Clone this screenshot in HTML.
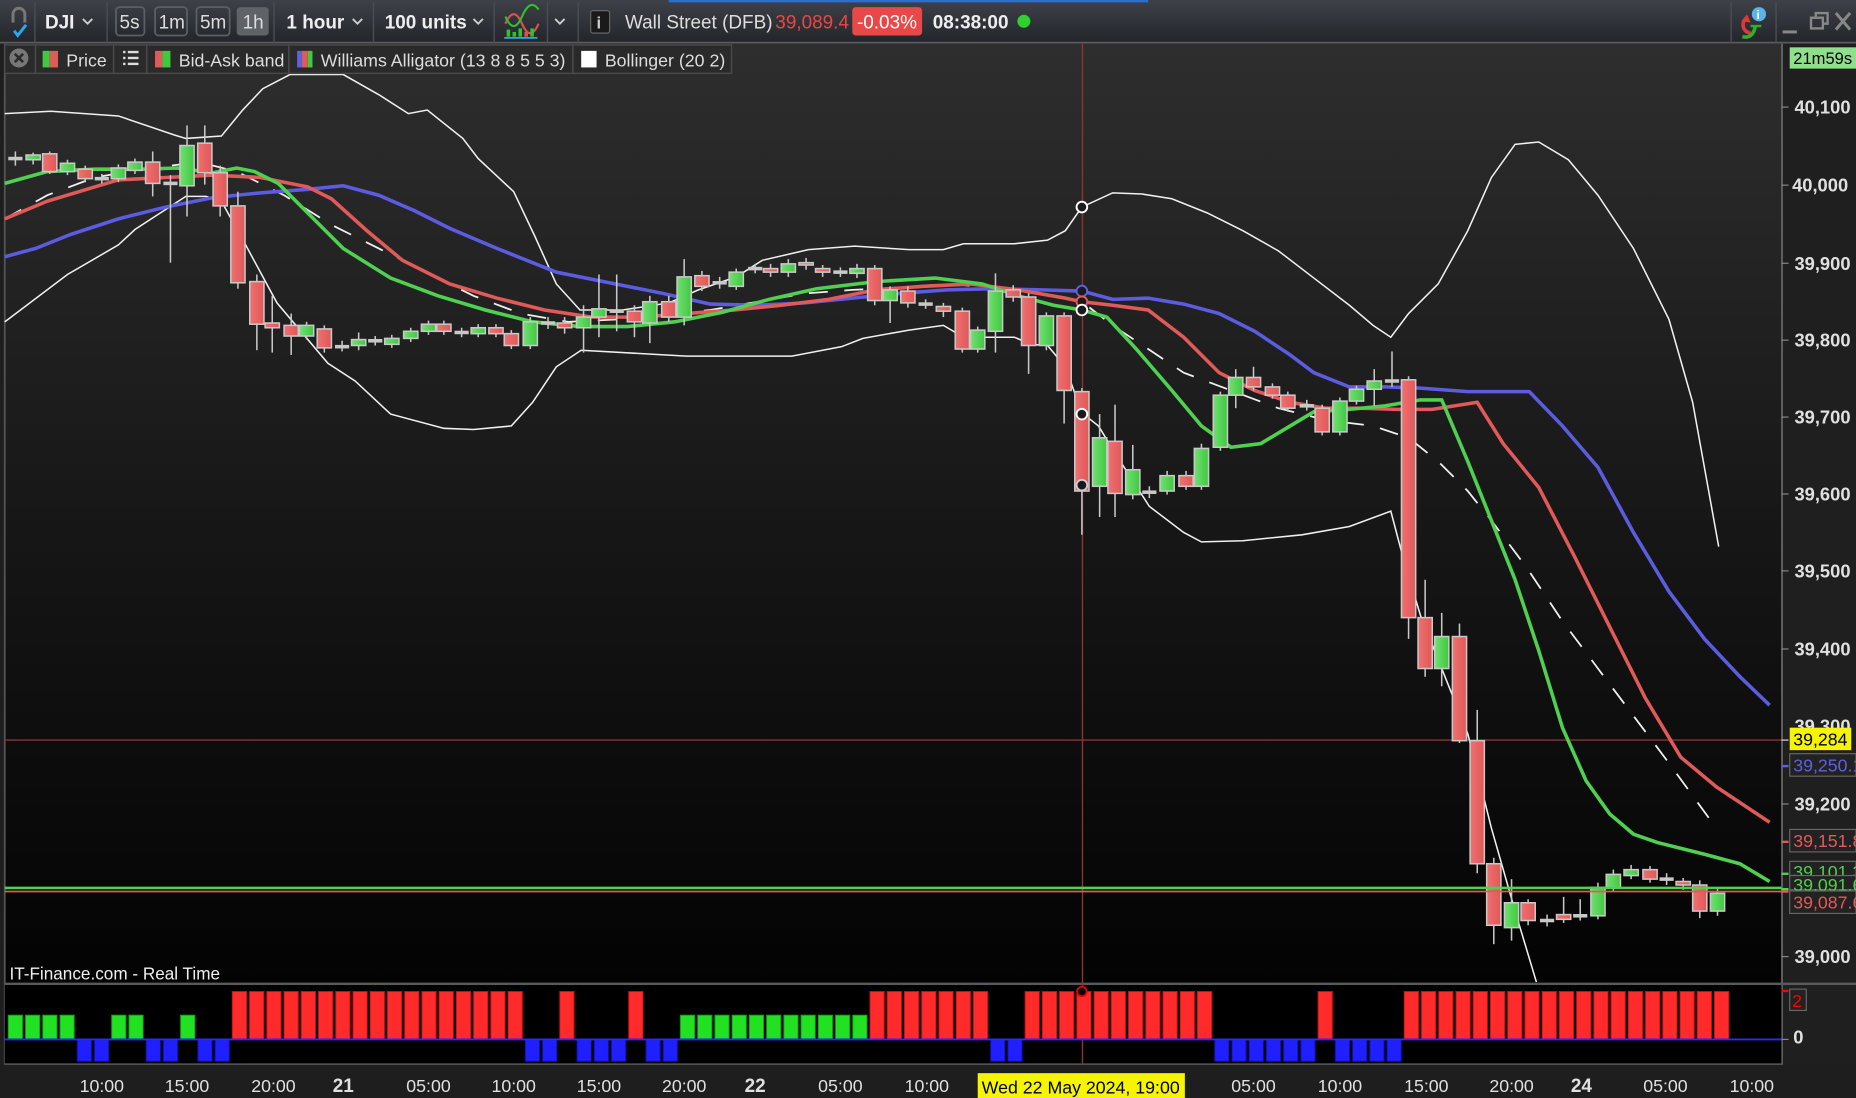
<!DOCTYPE html>
<html><head><meta charset="utf-8"><style>
html,body{margin:0;padding:0;background:#000;overflow:hidden}
svg{display:block}
text{font-family:"Liberation Sans",sans-serif}
</style></head><body>
<svg id="s" width="1856" height="1098" viewBox="0 0 1568 928" preserveAspectRatio="none" xmlns="http://www.w3.org/2000/svg">
<defs>
<linearGradient id="bg" x1="0" y1="0" x2="0" y2="1"><stop offset="0" stop-color="#2e2e2e"/><stop offset="0.5" stop-color="#171717"/><stop offset="1" stop-color="#030303"/></linearGradient>
<linearGradient id="tb" x1="0" y1="0" x2="0" y2="1"><stop offset="0" stop-color="#3e4248"/><stop offset="1" stop-color="#22252a"/></linearGradient>
<linearGradient id="rc" x1="0" y1="0" x2="1" y2="0"><stop offset="0" stop-color="#f07070"/><stop offset="1" stop-color="#e05858"/></linearGradient>
<linearGradient id="gc" x1="0" y1="0" x2="1" y2="0"><stop offset="0" stop-color="#70e070"/><stop offset="1" stop-color="#40c840"/></linearGradient>
</defs>
<rect width="1568" height="928" fill="#1e1e1e"/>
<!-- chart bg -->
<rect x="4" y="37" width="1501" height="794" fill="url(#bg)"/>
<rect x="1505" y="37" width="63" height="863" fill="#1f1f1f"/>
<line x1="1505.5" y1="37" x2="1505.5" y2="900" stroke="#666" stroke-width="1.5"/>
<line x1="4" y1="37" x2="4" y2="900" stroke="#555" stroke-width="1.5"/>
<!-- indicator panel -->
<rect x="4" y="832" width="1501" height="67" fill="#000"/>
<line x1="4" y1="831.5" x2="1568" y2="831.5" stroke="#5a5a5a" stroke-width="2"/>
<line x1="4" y1="899.5" x2="1505" y2="899.5" stroke="#5a5a5a" stroke-width="1.5"/>
<rect x="0" y="900" width="1568" height="28" fill="#1e1e1e"/>
<g id="grid"></g>
<!-- horizontal lines -->
<line x1="4" y1="625.5" x2="1505" y2="625.5" stroke="#8a3434" stroke-width="1.2"/>
<line x1="914.5" y1="37" x2="914.5" y2="900" stroke="#8a3434" stroke-width="1.2"/>
<g id="lines"></g>
<g id="candles"></g>
<line x1="4" y1="750.5" x2="1505" y2="750.5" stroke="#4fd04f" stroke-width="2.2"/>
<line x1="4" y1="753.5" x2="1505" y2="753.5" stroke="#e05a5a" stroke-width="1.5"/>
<g id="circles" fill="#1a1a1a" stroke-width="1.6">
<circle cx="914" cy="175" r="4.5" stroke="#fff"/>
<circle cx="914" cy="246" r="4.5" stroke="#6060e0"/>
<circle cx="914" cy="255" r="4.5" stroke="#e05a5a"/>
<circle cx="914" cy="262" r="4.5" stroke="#fff"/>
<circle cx="914" cy="350" r="4.5" stroke="#fff"/>
<circle cx="914" cy="410" r="4.5" stroke="#ccc"/>
</g>
<g id="bars"></g>
<line x1="4" y1="878.5" x2="1505" y2="878.5" stroke="#2a2aff" stroke-width="1.5"/>
<circle cx="914" cy="838" r="4" fill="#000" stroke="#e00" stroke-width="1.5"/>
<text x="8" y="828" font-size="14.5" fill="#eee">IT-Finance.com - Real Time</text>

<!-- price axis -->
<g font-size="15.5" fill="#e0e0e0" font-weight="bold">
<text x="1516" y="96">40,100</text>
<text x="1514" y="162">40,000</text>
<text x="1516" y="228">39,900</text>
<text x="1516" y="293">39,800</text>
<text x="1516" y="358">39,700</text>
<text x="1516" y="423">39,600</text>
<text x="1516" y="488">39,500</text>
<text x="1516" y="554">39,400</text>
<text x="1516" y="619">39,300</text>
<text x="1516" y="685">39,200</text>
<text x="1516" y="814">39,000</text>
</g>
<g stroke="#888" stroke-width="1">
<line x1="1505" y1="90.5" x2="1511" y2="90.5"/><line x1="1505" y1="156.5" x2="1511" y2="156.5"/><line x1="1505" y1="222.5" x2="1511" y2="222.5"/><line x1="1505" y1="287.5" x2="1511" y2="287.5"/><line x1="1505" y1="352.5" x2="1511" y2="352.5"/><line x1="1505" y1="417.5" x2="1511" y2="417.5"/><line x1="1505" y1="482.5" x2="1511" y2="482.5"/><line x1="1505" y1="548.5" x2="1511" y2="548.5"/><line x1="1505" y1="679.5" x2="1511" y2="679.5"/><line x1="1505" y1="808.5" x2="1511" y2="808.5"/>
</g>
<rect x="1512" y="40" width="56" height="18" fill="#8ee08a"/>
<text x="1515" y="54" font-size="14" fill="#000">21m59s</text>
<rect x="1512" y="728" width="56" height="14" fill="#222" stroke="#666"/>
<text x="1515" y="742" font-size="15" fill="#4fd04f">39,101.3</text>
<rect x="1512" y="740" width="56" height="12" fill="#222" stroke="#666"/>
<text x="1515" y="753" font-size="15" fill="#4fd04f">39,091.6</text>
<rect x="1512" y="615" width="52" height="19" fill="#f5f500"/>
<text x="1515" y="630" font-size="15" fill="#000">39,284</text>
<rect x="1512" y="637" width="56" height="19" fill="#222" stroke="#666"/>
<text x="1515" y="652" font-size="15" fill="#6060e0">39,250.1</text>
<rect x="1512" y="701" width="56" height="19" fill="#222" stroke="#666"/>
<text x="1515" y="716" font-size="15" fill="#e05a5a">39,151.8</text>
<rect x="1512" y="753" width="56" height="19" fill="#222" stroke="#666"/>
<text x="1515" y="768" font-size="15" fill="#e05a5a">39,087.6</text>
<line x1="1505" y1="625.5" x2="1511" y2="625.5" stroke="#ddd"/>
<line x1="1505" y1="647.5" x2="1511" y2="647.5" stroke="#6060e0" stroke-width="2"/>
<line x1="1505" y1="711.5" x2="1511" y2="711.5" stroke="#e05a5a" stroke-width="2"/>
<line x1="1505" y1="738.5" x2="1511" y2="738.5" stroke="#4fd04f" stroke-width="2"/>
<line x1="1505" y1="751.5" x2="1511" y2="751.5" stroke="#4fd04f" stroke-width="2"/>
<line x1="1505" y1="753.5" x2="1511" y2="753.5" stroke="#e05a5a" stroke-width="2"/>
<rect x="1512" y="836" width="14" height="18" fill="#222" stroke="#666"/>
<text x="1514" y="851" font-size="15" fill="#f00">2</text>
<line x1="1505" y1="837.5" x2="1511" y2="837.5" stroke="#f00" stroke-width="2"/>
<text x="1515" y="882" font-size="15.5" fill="#e0e0e0" font-weight="bold">0</text>
<line x1="1505" y1="878.5" x2="1511" y2="878.5" stroke="#888"/>

<!-- time axis -->
<g font-size="15" fill="#e0e0e0" text-anchor="middle">
<text x="86" y="923">10:00</text><text x="158" y="923">15:00</text><text x="231" y="923">20:00</text>
<text x="290" y="923" font-weight="bold" font-size="16">21</text>
<text x="362" y="923">05:00</text><text x="434" y="923">10:00</text><text x="506" y="923">15:00</text><text x="578" y="923">20:00</text>
<text x="638" y="923" font-weight="bold" font-size="16">22</text>
<text x="710" y="923">05:00</text><text x="783" y="923">10:00</text>
<text x="1059" y="923">05:00</text><text x="1132" y="923">10:00</text><text x="1205" y="923">15:00</text><text x="1277" y="923">20:00</text>
<text x="1336" y="923" font-weight="bold" font-size="16">24</text>
<text x="1407" y="923">05:00</text><text x="1480" y="923">10:00</text>
</g>
<rect x="826" y="907" width="175" height="21" fill="#f5f500"/>
<text x="913" y="924" font-size="15" fill="#000" text-anchor="middle">Wed 22 May 2024, 19:00</text>

<!-- toolbar -->
<rect x="0" y="0" width="1568" height="36" fill="url(#tb)"/>
<rect x="565" y="0" width="405" height="2" fill="#2a6fd4"/>
<line x1="0" y1="36" x2="1568" y2="36" stroke="#595d62" stroke-width="1.5"/>
<g stroke="#4a4e54" stroke-width="1.2">
<line x1="29.5" y1="2" x2="29.5" y2="36"/><line x1="90.5" y1="2" x2="90.5" y2="36"/><line x1="231.5" y1="2" x2="231.5" y2="36"/><line x1="315.5" y1="2" x2="315.5" y2="36"/><line x1="417.5" y1="2" x2="417.5" y2="36"/><line x1="462.5" y1="2" x2="462.5" y2="36"/><line x1="488.5" y1="2" x2="488.5" y2="36"/><line x1="1462.5" y1="2" x2="1462.5" y2="36"/><line x1="1500.5" y1="2" x2="1500.5" y2="36"/>
</g>
<!-- left logo -->
<path d="M11 19 V12 a5 5 0 0 1 10 0 V19" fill="none" stroke="#777" stroke-width="2.5"/>
<path d="M12 26 l3 4 l7 -9" fill="none" stroke="#2aa9f0" stroke-width="2.5"/>
<text x="38" y="24" font-size="16" fill="#eee" font-weight="bold">DJI</text>
<path d="M70 16 l4 4 l4 -4" fill="none" stroke="#ccc" stroke-width="1.6"/>
<g fill="none" stroke="#5a5f66" stroke-width="1.5">
<rect x="98" y="6" width="24" height="24" rx="3"/><rect x="131" y="6" width="27" height="24" rx="3"/><rect x="166" y="6" width="28" height="24" rx="3"/>
</g>
<rect x="200" y="6" width="27" height="24" rx="3" fill="#5f6368"/>
<g font-size="16" fill="#ddd">
<text x="101" y="24">5s</text><text x="134" y="24">1m</text><text x="169" y="24">5m</text><text x="205" y="24">1h</text>
</g>
<text x="242" y="24" font-size="16" fill="#eee" font-weight="bold">1 hour</text>
<path d="M298 16 l4 4 l4 -4" fill="none" stroke="#ccc" stroke-width="1.6"/>
<text x="325" y="24" font-size="16" fill="#eee" font-weight="bold">100 units</text>
<path d="M400 16 l4 4 l4 -4" fill="none" stroke="#ccc" stroke-width="1.6"/>
<path d="M427 20 q7 -16 14 0 t14 0" fill="none" stroke="#e05050" stroke-width="1.8"/>
<path d="M427 14 q7 16 14 0 t14 -6" fill="none" stroke="#30c030" stroke-width="1.8"/>
<g fill="#30c030"><rect x="428" y="25" width="3" height="6"/><rect x="433" y="27" width="3" height="4"/><rect x="438" y="24" width="3" height="7"/><rect x="443" y="27" width="3" height="4" fill="#e05050"/><rect x="448" y="24" width="3" height="7"/></g>
<line x1="426" y1="32" x2="454" y2="32" stroke="#2aa9f0" stroke-width="1.5"/>
<path d="M469 16 l4 4 l4 -4" fill="none" stroke="#ccc" stroke-width="1.6"/>
<rect x="499" y="9" width="16" height="19" rx="2" fill="#1a1a1a" stroke="#666"/>
<text x="504" y="24" font-size="14" fill="#ccc" font-weight="bold">i</text>
<text x="528" y="24" font-size="16" fill="#ddd">Wall Street (DFB)</text>
<text x="655" y="24" font-size="16" fill="#ee4444">39,089.4</text>
<rect x="720" y="6" width="59" height="24" rx="3" fill="#e84848"/>
<text x="724" y="24" font-size="16" fill="#fff">-0.03%</text>
<text x="788" y="24" font-size="16" fill="#eee" font-weight="bold">08:38:00</text>
<circle cx="865" cy="18" r="5.5" fill="#2fd02f"/>
<!-- right icons -->
<path d="M1479 28 a7 7 0 0 1 -3 -13" fill="none" stroke="#e03838" stroke-width="3"/>
<path d="M1471 18 l5 -6 l3 7z" fill="#e03838"/>
<path d="M1472 31 q9 2 11 -9" fill="none" stroke="#2fb02f" stroke-width="3"/>
<line x1="1479" y1="22" x2="1488" y2="22" stroke="#2fb02f" stroke-width="2"/>
<circle cx="1486" cy="12" r="6" fill="#5ab4ea"/>
<text x="1484" y="16" font-size="10" fill="#fff" font-weight="bold">i</text>
<line x1="1506" y1="27" x2="1518" y2="27" stroke="#888" stroke-width="2.5"/>
<rect x="1530" y="15" width="10" height="9" fill="none" stroke="#888" stroke-width="2"/>
<path d="M1534 14 v-3 h10 v9 h-3" fill="none" stroke="#888" stroke-width="2"/>
<path d="M1551 11 l12 14 M1563 11 l-12 14" stroke="#888" stroke-width="2.5"/>

<!-- legend row -->
<g fill="#2a2a2a" stroke="#4a4a4a" stroke-width="1.2">
<rect x="4" y="38" width="26" height="24"/><rect x="30" y="38" width="66" height="24"/><rect x="96" y="38" width="28" height="24"/><rect x="124" y="38" width="120" height="24"/><rect x="244" y="38" width="240" height="24"/><rect x="484" y="38" width="134" height="24"/>
</g>
<circle cx="16" cy="49" r="8" fill="#777"/>
<path d="M12.5 45.5 l7 7 M19.5 45.5 l-7 7" stroke="#2a2a2a" stroke-width="2.2"/>
<rect x="36" y="43" width="6" height="14" fill="#40c840"/><rect x="42" y="43" width="7" height="14" fill="#e05a5a"/>
<text x="56" y="56" font-size="15" fill="#ddd">Price</text>
<g fill="#ddd"><rect x="104" y="43" width="2" height="2"/><rect x="104" y="48" width="2" height="2"/><rect x="104" y="53" width="2" height="2"/><rect x="108" y="43" width="9" height="2"/><rect x="108" y="48" width="9" height="2"/><rect x="108" y="53" width="9" height="2"/></g>
<rect x="131" y="43" width="6" height="14" fill="#e05a5a"/><rect x="137" y="43" width="7" height="14" fill="#40c840"/>
<text x="151" y="56" font-size="15" fill="#ddd">Bid-Ask band</text>
<rect x="251" y="43" width="4" height="14" fill="#6060e0"/><rect x="255" y="43" width="5" height="14" fill="#e05a5a"/><rect x="260" y="43" width="4" height="14" fill="#40c840"/>
<text x="271" y="56" font-size="15" fill="#ddd">Williams Alligator (13 8 8 5 5 3)</text>
<rect x="491" y="43" width="13" height="14" fill="#fff"/>
<text x="511" y="56" font-size="15" fill="#ddd">Bollinger (20 2)</text>
</svg>
<script>
var NS="http://www.w3.org/2000/svg";
function el(p,t,a){var e=document.createElementNS(NS,t);for(var k in a)e.setAttribute(k,a[k]);p.appendChild(e);return e;}
function pl(pts){return pts.map(function(p){return p[0]+","+p[1]}).join(" ");}
var L=document.getElementById("lines");
var bbU=[[4,96],[43,94],[100,98],[147,114],[157,117],[187,115],[205,93],[222,75],[245,63],[290,63],[320,80],[345,96],[361,93],[391,117],[404,134],[434,162],[452,200],[470,240],[490,262],[526,262],[565,256],[590,245],[622,234],[644,220],[683,211],[722,208],[768,211],[797,211],[814,206],[857,206],[885,203],[900,195],[914,175],[940,163],[965,164],[990,168],[1020,180],[1050,195],[1080,212],[1110,235],[1140,258],[1160,275],[1175,285],[1190,265],[1215,240],[1240,195],[1260,150],[1280,122],[1300,120],[1325,135],[1350,165],[1380,210],[1410,270],[1430,340],[1452,462]];
var bbL=[[4,272],[57,232],[100,207],[114,194],[157,166],[174,166],[187,170],[207,206],[234,256],[277,307],[300,322],[330,350],[375,362],[400,363],[432,360],[450,340],[470,310],[491,296],[580,301],[669,301],[711,293],[729,286],[768,279],[797,275],[814,285],[857,285],[871,291],[885,292],[900,310],[914,349],[928,360],[942,383],[971,428],[1000,450],[1015,458],[1050,457],[1100,452],[1140,445],[1175,432],[1185,470],[1200,520],[1240,620],[1260,700],[1280,770],[1298,830]];
var bbM=[[4,185],[40,165],[80,150],[120,143],[160,138],[180,140],[200,145],[240,165],[280,190],[320,210],[360,230],[400,250],[440,265],[480,272],[520,270],[560,266],[600,262],[640,255],[680,248],[720,245],[760,243],[800,240],[840,243],[870,247],[900,252],[914,255],[940,275],[970,295],[1000,315],[1040,330],[1080,345],[1120,355],[1160,360],[1190,370],[1215,390],[1240,415],[1260,440],[1290,480],[1320,525],[1350,565],[1380,605],[1410,645],[1450,700]];
var blue=[[4,217],[30,210],[60,198],[100,185],[140,175],[180,167],[220,163],[260,160],[290,157],[320,165],[350,178],[380,193],[420,210],[470,230],[520,240],[560,248],[600,257],[640,258],[680,256],[720,252],[760,248],[800,245],[840,244],[880,245],[914,246],[940,253],[970,252],[1000,257],[1030,265],[1060,280],[1090,300],[1110,315],[1140,327],[1170,327],[1200,328],[1240,331],[1270,331],[1292,331],[1320,360],[1350,395],[1380,450],[1410,500],[1440,540],[1470,572],[1495,596]];
var red=[[4,185],[40,170],[80,158],[100,152],[140,150],[180,148],[220,150],[260,158],[280,168],[310,195],[340,220],[380,240],[420,252],[460,262],[500,268],[540,268],[580,265],[620,262],[660,258],[700,253],[740,245],[780,242],[820,240],[860,245],[900,252],[914,255],[940,258],[970,262],[1000,285],[1030,315],[1060,330],[1090,340],[1120,345],[1150,345],[1180,346],[1210,346],[1248,340],[1270,375],[1300,412],[1330,470],[1360,530],[1390,590],[1420,640],[1450,665],[1495,695]];
var green=[[4,155],[40,145],[80,143],[120,143],[150,142],[180,146],[200,142],[215,145],[235,155],[260,180],[290,210],[330,235],[370,250],[410,262],[450,272],[490,276],[530,276],[570,272],[610,264],[650,253],[690,244],[740,238],[790,235],[830,240],[860,250],[890,258],[914,262],[935,268],[960,295],[990,330],[1015,360],[1040,378],[1065,375],[1090,360],[1110,348],[1140,346],[1170,343],[1200,338],[1218,338],[1240,390],[1260,440],[1280,490],[1300,550],[1320,615],[1340,660],[1360,688],[1380,705],[1400,712],[1440,722],[1470,730],[1495,745]];
el(L,"polyline",{points:pl(bbU),fill:"none",stroke:"#f0f0f0","stroke-width":1.3});
el(L,"polyline",{points:pl(bbL),fill:"none",stroke:"#f0f0f0","stroke-width":1.3});
el(L,"polyline",{points:pl(bbM),fill:"none",stroke:"#f0f0f0","stroke-width":1.5,"stroke-dasharray":"16 14"});
el(L,"polyline",{points:pl(blue),fill:"none",stroke:"#5c5ce0","stroke-width":3});
el(L,"polyline",{points:pl(red),fill:"none",stroke:"#e05a5a","stroke-width":3});
el(L,"polyline",{points:pl(green),fill:"none",stroke:"#50d050","stroke-width":3});
// candles [x,o,c,h,l]
var C=[[13,134,134,128,140],[28,135,131,129,139],[42,130,145,128,147],[57,145,138,135,148],[72,143,151,140,154],[86,151,151,147,155],[100,151,142,139,154],[114,144,137,134,147],[129,137,155,128,166],[144,155,155,148,222],[158,157,123,106,183],[173,121,146,106,156],[186,146,174,140,183],[201,174,239,162,244],[217,238,274,232,296],[230,273,277,250,298],[246,275,284,265,300],[259,284,275,272,287],[274,278,294,275,298],[289,293,293,288,297],[303,292,287,281,296],[317,288,288,284,292],[331,291,286,283,294],[347,286,280,277,289],[362,280,274,271,283],[375,274,280,271,283],[390,281,281,277,285],[404,282,277,274,285],[419,277,282,274,285],[432,282,292,279,295],[448,292,272,268,295],[463,273,273,268,278],[477,273,277,268,282],[493,277,268,258,298],[506,268,261,232,285],[521,263,263,232,280],[536,263,272,258,285],[549,273,255,250,290],[565,255,268,250,272],[578,268,234,219,275],[593,233,242,229,246],[608,239,239,234,244],[622,242,230,227,245],[638,227,227,223,231],[651,227,230,223,234],[666,230,223,219,234],[681,222,224,218,228],[695,227,230,224,234],[710,230,230,226,234],[724,231,227,223,235],[739,227,254,224,258],[752,254,245,242,273],[767,246,256,242,260],[782,257,257,253,261],[797,259,263,256,268],[813,263,295,260,298],[826,295,279,276,298],[841,280,246,231,298],[856,245,251,241,255],[869,251,292,248,316],[884,292,267,264,296],[899,267,330,264,358],[914,331,415,328,452],[929,411,370,350,437],[942,373,417,342,437],[957,418,397,376,422],[971,416,416,411,421],[986,415,402,398,418],[1002,402,411,398,414],[1015,411,379,375,414],[1031,378,334,331,381],[1044,334,319,312,345],[1059,319,327,310,330],[1075,327,334,324,337],[1088,334,345,331,348],[1104,343,343,338,347],[1117,345,365,342,368],[1132,365,339,336,368],[1146,339,329,326,342],[1161,329,322,312,343],[1176,322,322,297,327],[1190,321,522,318,540],[1204,522,565,490,572],[1218,565,538,518,580],[1233,538,626,527,628],[1248,626,730,600,738],[1262,730,782,725,798],[1277,784,763,743,795],[1291,763,778,760,782],[1307,778,778,773,783],[1321,773,777,758,780],[1335,774,774,760,778],[1350,774,750,746,777],[1363,750,739,735,753],[1378,740,735,731,743],[1394,735,743,732,746],[1408,743,743,738,748],[1422,745,748,742,752],[1436,748,770,744,776],[1451,770,755,751,774]];
var G=document.getElementById("candles");
C.forEach(function(c){var x=c[0],o=c[1],cl=c[2],h=c[3],l=c[4];
 el(G,"line",{x1:x,y1:h,x2:x,y2:l,stroke:"#c8c8c8","stroke-width":1.3});
 var t=Math.min(o,cl),b=Math.max(o,cl);
 if(b-t<2){el(G,"rect",{x:x-6,y:t-1.5,width:12,height:3,fill:"#c8c8c8"});}
 else el(G,"rect",{x:x-6,y:t,width:12,height:b-t,fill:cl<o?"url(#gc)":"url(#rc)",stroke:"#c8c8c8","stroke-width":1.3});
});
var S="GGGGBBGGBBGBB"+"R".repeat(17)+"BBRBBBRBB"+"G".repeat(11)+"R".repeat(7)+"BB"+"R".repeat(11)+"B".repeat(6)+"R"+"B".repeat(4)+"R".repeat(19);
var B=document.getElementById("bars");
for(var i=0;i<S.length;i++){var x=13+14.56*i,k=S[i];
 if(k=="R")el(B,"rect",{x:x-6,y:838,width:12,height:40,fill:"#ff2a2a",stroke:"#d01010","stroke-width":0.8});
 else if(k=="G")el(B,"rect",{x:x-6,y:858,width:12,height:20,fill:"#22e022",stroke:"#10a010","stroke-width":0.8});
 else el(B,"rect",{x:x-6,y:879,width:12,height:18,fill:"#2020ff",stroke:"#1010b0","stroke-width":0.8});
}
</script>
</body></html>
